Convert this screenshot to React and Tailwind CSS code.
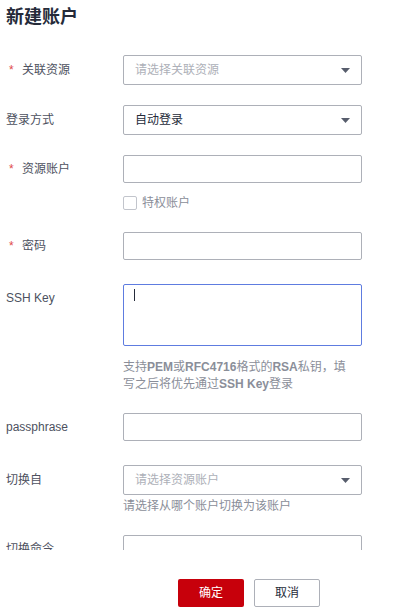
const font = { fontFamily: '"Liberation Sans", "Noto Sans CJK SC", sans-serif' };

const Label = ({ children, required, h = "30px" }) => (
  <div
    className="w-[123px] shrink-0 flex items-center pl-[6px] text-[12px] text-[#4d5160]"
    style={{ height: h }}
  >
    {required && (
      <span className="w-[16px] pl-[3px] text-[#e04a4a] text-[12px] leading-none">*</span>
    )}
    <span>{children}</span>
  </div>
);

const Caret = () => (
  <svg width="9" height="5" viewBox="0 0 9 5" className="shrink-0">
    <path d="M0 0h9L4.5 5z" fill="#575d6c" />
  </svg>
);

const Select = ({ value, placeholder }) => (
  <div className="w-[239px] h-[30px] border border-[#adb0b8] rounded-[2px] flex items-center justify-between pl-[11px] pr-[11px] text-[12px]">
    {value ? (
      <span className="text-[#252b3a]">{value}</span>
    ) : (
      <span className="text-[#adb0b8]">{placeholder}</span>
    )}
    <Caret />
  </div>
);

const Input = () => (
  <div className="w-[239px] h-[28px] border border-[#adb0b8] rounded-[2px]" />
);

export default function App() {
  return (
    <div className="w-[415px] h-[615px] bg-white flex flex-col" style={font}>
      <div className="h-[40px] shrink-0 pl-[6px] pt-[5px]">
        <h1 className="text-[18px] leading-[24px] font-bold text-[#252b3a]">新建账户</h1>
      </div>

      <div className="h-[510px] shrink-0 overflow-hidden pt-[15px]">
        <div className="flex mb-[20px]">
          <Label required>关联资源</Label>
          <Select placeholder="请选择关联资源" />
        </div>

        <div className="flex mb-[20px]">
          <Label>登录方式</Label>
          <Select value="自动登录" />
        </div>

        <div className="flex">
          <Label required h="28px">资源账户</Label>
          <div>
            <Input />
            <label className="mt-[10px] h-[20px] flex items-center gap-[5px] text-[12px] text-[#8a8e99]">
              <span className="w-[14px] h-[14px] border border-[#c2c5cc] rounded-[2px] bg-white" />
              特权账户
            </label>
          </div>
        </div>

        <div className="flex mt-[19px] mb-[24px]">
          <Label required h="28px">密码</Label>
          <Input />
        </div>

        <div className="flex">
          <Label h="28px">SSH Key</Label>
          <div>
            <div className="w-[239px] h-[62px] border border-[#5e7ce0] rounded-[2px] pl-[10px] pt-[4px]">
              <div className="w-[1px] h-[12px] bg-[#252b3a]" />
            </div>
            <p className="mt-[13px] w-[239px] text-[12px] leading-[17px] text-[#8a8e99]">
              支持<b className="font-semibold">PEM</b>或<b className="font-semibold">RFC4716</b>格式的<b className="font-semibold">RSA</b>私钥，填
              <br />
              写之后将优先通过<b className="font-semibold">SSH Key</b>登录
            </p>
          </div>
        </div>

        <div className="flex mt-[20px] mb-[24px]">
          <Label h="28px">passphrase</Label>
          <Input />
        </div>

        <div className="flex">
          <Label>切换自</Label>
          <div>
            <Select placeholder="请选择资源账户" />
            <p className="mt-[2px] text-[12px] leading-[18px] text-[#8a8e99]">
              请选择从哪个账户切换为该账户
            </p>
          </div>
        </div>

        <div className="flex mt-[20px]">
          <Label h="28px">切换命令</Label>
          <Input />
        </div>
      </div>

      <div className="flex gap-[10px] pl-[178px] pt-[29px]">
        <button className="w-[66px] h-[28px] rounded-[2px] bg-[#c7000b] text-white text-[12px]">
          确定
        </button>
        <button className="w-[66px] h-[28px] rounded-[2px] border border-[#adb0b8] bg-white text-[#252b3a] text-[12px]">
          取消
        </button>
      </div>
    </div>
  );
}
